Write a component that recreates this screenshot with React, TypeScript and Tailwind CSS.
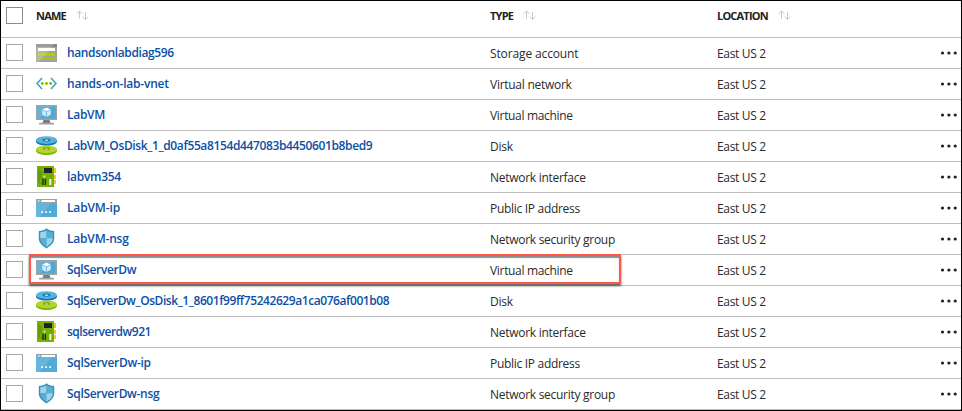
import React from "react";

type Kind = "storage" | "vnet" | "vm" | "disk" | "nic" | "ip" | "nsg";

const TYPES: Record<Kind, { label: string; tracking: string }> = {
  storage: { label: "Storage account", tracking: "tracking-[-0.13px]" },
  vnet: { label: "Virtual network", tracking: "tracking-[-0.27px]" },
  vm: { label: "Virtual machine", tracking: "tracking-[-0.32px]" },
  disk: { label: "Disk", tracking: "tracking-[-0.2px]" },
  nic: { label: "Network interface", tracking: "tracking-[-0.28px]" },
  ip: { label: "Public IP address", tracking: "tracking-[-0.3px]" },
  nsg: { label: "Network security group", tracking: "tracking-[-0.28px]" },
};

const ROWS: { name: string; kind: Kind; tracking: string; selected?: boolean }[] = [
  { name: "handsonlabdiag596", kind: "storage", tracking: "tracking-[-0.38px]" },
  { name: "hands-on-lab-vnet", kind: "vnet", tracking: "tracking-[-0.22px]" },
  { name: "LabVM", kind: "vm", tracking: "tracking-[-0.3px]" },
  { name: "LabVM_OsDisk_1_d0af55a8154d447083b4450601b8bed9", kind: "disk", tracking: "tracking-[-0.37px]" },
  { name: "labvm354", kind: "nic", tracking: "tracking-[-0.3px]" },
  { name: "LabVM-ip", kind: "ip", tracking: "tracking-[-0.15px]" },
  { name: "LabVM-nsg", kind: "nsg", tracking: "tracking-[-0.2px]" },
  { name: "SqlServerDw", kind: "vm", tracking: "tracking-[-0.37px]", selected: true },
  { name: "SqlServerDw_OsDisk_1_8601f99ff75242629a1ca076af001b08", kind: "disk", tracking: "tracking-[-0.43px]" },
  { name: "sqlserverdw921", kind: "nic", tracking: "tracking-[-0.5px]" },
  { name: "SqlServerDw-ip", kind: "ip", tracking: "tracking-[-0.3px]" },
  { name: "SqlServerDw-nsg", kind: "nsg", tracking: "tracking-[-0.33px]" },
];

function ResourceIcon({ kind }: { kind: Kind }) {
  return (
    <svg width="21" height="21" viewBox="0 0 21 21" className="mt-1 block shrink-0 self-start">
      {kind === "storage" && (
        <>
          <rect y="2" width="21" height="18" fill="#a0a1a2" />
          <rect y="2" width="21" height="3" fill="#858585" />
          <rect x="2" y="6" width="17" height="3" fill="#fff" />
          <rect x="2" y="10.500" width="17" height="3.500" fill="#b0cc10" />
          <rect x="2" y="15" width="17" height="3" fill="#a4c516" />
          <path d="M0 2h18L3 20H0z" fill="#fff" opacity=".2" />
        </>
      )}
      {kind === "vnet" && (
        <>
          <path d="M6 5L1 10.500l5 5.500M15 5l5 5.500l-5 5.500" fill="none" stroke="#3f9fd0" strokeWidth="1.6" />
          <circle cx="6.300" cy="10.500" r="1.400" fill="#7fba00" />
          <circle cx="10.500" cy="10.500" r="1.400" fill="#7fba00" />
          <circle cx="14.700" cy="10.500" r="1.400" fill="#7fba00" />
        </>
      )}
      {kind === "vm" && (
        <>
          <rect y="1" width="21" height="15" fill="#a0a1a2" />
          <rect x="1.600" y="2.500" width="17.800" height="12" fill="#4fa9d6" />
          <path d="M1.600 2.500h15L4 14.500H1.600z" fill="#fff" opacity=".12" />
          <path d="M7.500 16h6l1 3h-8z" fill="#7a7a7a" />
          <rect x="3" y="18.800" width="15" height="1.700" fill="#a0a1a2" />
          <path d="M10.500 3.700l4.300 2v5l-4.300 2.300-4.300-2.300v-5z" fill="#cfe9f5" />
          <path d="M10.500 3.700l4.300 2-4.300 2-4.300-2z" fill="#fff" />
          <path d="M10.500 7.700v5.300M6.200 5.700l4.300 2 4.300-2" fill="none" stroke="#4fa9d6" strokeWidth=".7" />
        </>
      )}
      {kind === "disk" && (
        <>
          <path d="M0 14.500v1.200c0 2.400 4.700 4.300 10.500 4.300S21 18.100 21 15.700v-1.200z" fill="#7fba00" />
          <ellipse cx="10.500" cy="14.300" rx="10.500" ry="3.900" fill="#b4d334" />
          <ellipse cx="10.500" cy="13.700" rx="3.600" ry="1.400" fill="#7fa800" />
          <ellipse cx="10.500" cy="14" rx="1.800" ry=".5" fill="#e8f2c8" />
          <path d="M0 5.500v.9c0 2.400 4.700 4.100 10.500 4.100S21 8.800 21 6.400v-.9z" fill="#1474ba" />
          <ellipse cx="10.500" cy="5.100" rx="10.500" ry="3.900" fill="#59b4d9" />
          <ellipse cx="10.500" cy="5" rx="3.900" ry="1.500" fill="#0f70b7" />
          <ellipse cx="10.500" cy="5.200" rx="2" ry=".6" fill="#dceef8" />
        </>
      )}
      {kind === "nic" && (
        <>
          <path d="M17 2h3v5h-3zM17 9h3v4h-3zM17 14h3v4h-3z" fill="#fcc22c" />
          <rect x="1" width="17" height="21" fill="#76b007" />
          <path d="M3 3v14M5 5v8h3M4 17h3M9 9.500v3M14 10h2" fill="none" stroke="#538b03" strokeWidth=".9" />
          <rect x="8" y="2" width="8" height="5" fill="#232323" />
          <rect x="6.300" y="13" width="1.400" height="6" fill="#232323" />
          <rect x="8.700" y="13" width="1.400" height="6" fill="#232323" />
          <rect x="13.300" y="13" width="2" height="6" fill="#f3f3e8" />
          <rect x="7.500" y="9.500" width="2" height="2" fill="#dcecc2" />
        </>
      )}
      {kind === "ip" && (
        <>
          <rect y="2" width="21" height="18" fill="#4fabd7" />
          <path d="M0 6h15L4 20H0z" fill="#fff" opacity=".13" />
          <rect y="2" width="21" height="4" fill="#a0a1a2" />
          <rect x="5.500" y="3" width="13.500" height="2" fill="#fff" />
          <circle cx="3" cy="4" r="1.900" fill="#59b4d9" />
          <path d="M4.300 4H2M3 3l-1 1 1 1" fill="none" stroke="#fff" strokeWidth=".6" />
          <path d="M5.300 14.200h1.700v1.700H5.300zM9.300 14.200H11v1.700H9.300zM13.300 14.200H15v1.700h-1.700z" fill="#fff" />
        </>
      )}
      {kind === "nsg" && (
        <>
          <path d="M10.500.3C8.500 2.300 6 3 2.800 3v7.500c0 4.500 4 7.700 7.700 10 3.700-2.300 7.700-5.500 7.700-10V3c-3.200 0-5.700-.7-7.700-2.700z" fill="#3890bd" />
          <path d="M10.500 2.200v8H4.200V4.200c2.600-.1 4.600-.7 6.300-2z" fill="#a0d2ea" />
          <path d="M10.500 2.200v8h6.300V4.200c-2.600-.1-4.600-.7-6.300-2z" fill="#59aed5" />
          <path d="M4.200 10.200h6.300v8.600c-3.200-2.200-6.300-4.800-6.300-8.600z" fill="#59aed5" />
          <path d="M16.800 10.200h-6.300v8.600c3.200-2.200 6.300-4.800 6.300-8.600z" fill="#a0d2ea" />
        </>
      )}
    </svg>
  );
}

function Checkbox({ dark }: { dark?: boolean }) {
  return <span className={`block size-[17px] shrink-0 border bg-white ${dark ? "border-[#8c8c8c]" : "border-[#a6a6a6]"}`} />;
}

function SortArrows() {
  return (
    <svg width="13" height="11" viewBox="0 0 13 11" fill="none" stroke="#c8c8c8" className="shrink-0">
      <path d="M3.500 8.500V1M.7 3.800L3.500 1l2.800 2.800M9.500 2v7.500M6.700 6.700l2.800 2.800 2.800-2.800" />
    </svg>
  );
}

function HeaderCell({ label }: { label: string }) {
  return (
    <div className="flex h-[17px] items-center gap-[10px] text-[11px] leading-4 font-bold tracking-[-0.8px] text-[#222]">
      <span>{label}</span>
      <SortArrows />
    </div>
  );
}

export default function App() {
  return (
    <div className="h-[411px] w-[962px] overflow-hidden border border-black bg-white font-['Open_Sans','Noto_Sans',sans-serif]">
      <div className="grid h-[37px] grid-cols-[35px_454px_227px_1fr] border-b border-[#bebebe] pt-[6px]">
        <div className="pl-[5px]"><Checkbox dark /></div>
        <HeaderCell label="NAME" />
        <HeaderCell label="TYPE" />
        <HeaderCell label="LOCATION" />
      </div>
      {ROWS.map((row) => (
        <div
          key={row.name}
          className="relative grid h-[31px] grid-cols-[35px_31px_423px_227px_1fr_22px] items-center border-b border-[#bebebe] text-[12px] leading-4 text-[#2b2b2b]"
        >
          <div className="self-start pt-[6px] pl-[5px]"><Checkbox /></div>
          <ResourceIcon kind={row.kind} />
          <span className={`pb-px font-semibold whitespace-nowrap text-[#0b50a5] ${row.tracking}`}>{row.name}</span>
          <span className={`pt-[2px] whitespace-nowrap ${TYPES[row.kind].tracking}`}>{TYPES[row.kind].label}</span>
          <span className="pt-[2px] tracking-[-0.33px] whitespace-nowrap">East US 2</span>
          <svg width="18" height="4" viewBox="0 0 18 4" fill="#1f1f1f">
            <circle cx="3.500" cy="2" r="1.600" />
            <circle cx="9.900" cy="2" r="1.600" />
            <circle cx="16.200" cy="2" r="1.600" />
          </svg>
          {row.selected && (
            <div className="absolute top-[-1px] left-[28px] z-10 h-[30px] w-[592px] border-2 border-[#ff5748] shadow-[0_2px_2px_rgba(0,0,0,0.6),inset_0_2px_1px_rgba(0,0,0,0.45)]" />
          )}
        </div>
      ))}
    </div>
  );
}
